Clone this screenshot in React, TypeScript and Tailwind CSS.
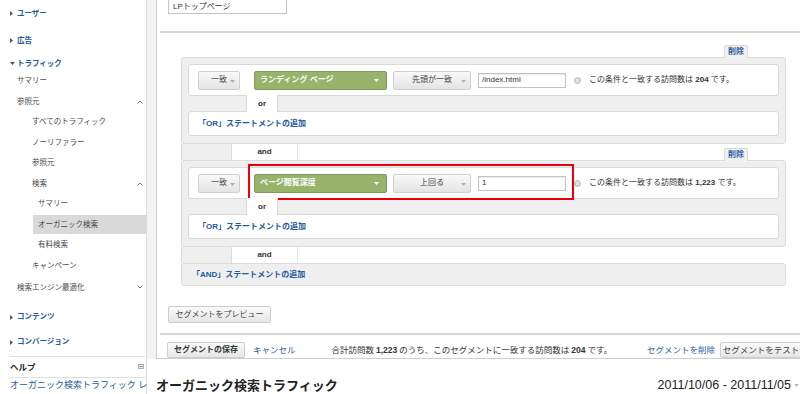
import React from "react";

const Caret = ({ color = "#9a9a9a" }: { color?: string }) => (
  <svg width="5" height="3" viewBox="0 0 5 3">
    <path d="M0 0h5L2.5 3z" fill={color} />
  </svg>
);

const TriRight = () => (
  <svg width="3" height="5" viewBox="0 0 3 5">
    <path d="M0 0l3 2.5L0 5z" fill="#555" />
  </svg>
);

const TriDown = () => (
  <svg width="5" height="3" viewBox="0 0 5 3">
    <path d="M0 0h5L2.5 3z" fill="#555" />
  </svg>
);

const Chev = ({ up = true }: { up?: boolean }) => (
  <svg width="6" height="4" viewBox="0 0 6 4">
    <path d={up ? "M0.5 3.5L3 1l2.5 2.5" : "M0.5 0.5L3 3l2.5-2.5"} stroke="#777" fill="none" strokeWidth="1" />
  </svg>
);

const ClearIcon = () => (
  <svg width="7" height="7" viewBox="0 0 7 7">
    <circle cx="3.5" cy="3.5" r="3.5" fill="#cacaca" />
    <path d="M2 2l3 3M5 2L2 5" stroke="#fff" strokeWidth="0.9" />
  </svg>
);

const Heading = ({ label, h, open = false }: { label: string; h: string; open?: boolean }) => (
  <div className={`${h} flex items-center pl-[10px]`}>
    <div className="w-[7px] flex items-center">{open ? <TriDown /> : <TriRight />}</div>
    <span className="text-[7.5px] font-bold text-[#245a9c]">{label}</span>
  </div>
);

const SubItem = ({ label, pl, chev }: { label: string; pl: string; chev?: "up" | "down" }) => (
  <div className={`h-[20.5px] flex items-center justify-between ${pl} pr-[3px] text-[7.5px] text-[#4a4a4a]`}>
    <span>{label}</span>
    {chev && <Chev up={chev === "up"} />}
  </div>
);

const GrayBtn = ({ children, w, bold = false }: { children: React.ReactNode; w: string; bold?: boolean }) => (
  <div
    className={`${w} h-[16px] shrink-0 flex items-center justify-center rounded-[2px] border border-[#cdcdcd] bg-gradient-to-b from-[#fafafa] to-[#e6e6e6] text-[8px] ${bold ? "font-bold text-[#333]" : "text-[#444]"}`}
  >
    {children}
  </div>
);

const SelectBtn = ({ label, w }: { label: string; w: string }) => (
  <div
    className={`${w} relative h-[19px] shrink-0 flex items-center justify-center rounded-[2px] border border-[#d0d0d0] bg-gradient-to-b from-[#f9f9f9] to-[#e4e4e4] text-[8px] text-[#444]`}
  >
    <span>{label}</span>
    <div className="absolute right-[4px] top-[8px]">
      <Caret color="#b0b0b0" />
    </div>
  </div>
);

const ConditionBlock = ({ field, op, value, count }: { field: string; op: string; value: string; count: string }) => (
  <div className="h-[87px] rounded-[3px] border border-[#dcdcdc] bg-[#efefef] px-[6px] pt-[6px] pb-[7px] flex flex-col">
    <div className="h-[32px] shrink-0 rounded-[3px] border border-[#d9d9d9] bg-white flex items-center pl-[9px]">
      <SelectBtn label="一致" w="w-[42px]" />
      <div className="ml-[14px] w-[133px] h-[19px] shrink-0 rounded-[2px] border border-[#7f9b58] bg-[#98b36c] flex items-center justify-between pl-[5px] pr-[7px]">
        <span className="text-[8px] font-bold text-white">{field}</span>
        <Caret color="#ffffff" />
      </div>
      <div className="ml-[6px]">
        <SelectBtn label={op} w="w-[78px]" />
      </div>
      <div className="ml-[7px] w-[88px] h-[15px] shrink-0 border border-[#c2c2c2] shadow-[inset_0_1px_1px_rgba(0,0,0,0.08)] bg-white flex items-center pl-[3px] text-[8px] text-[#333]">
        {value}
      </div>
      <div className="ml-[8px] flex items-center">
        <ClearIcon />
      </div>
      <div className="ml-[8px] text-[8px] text-[#333] whitespace-nowrap">
        この条件と一致する訪問数は <span className="font-bold">{count}</span> です。
      </div>
    </div>
    <div className="h-[15px] shrink-0 flex">
      <div className="relative z-10 ml-[58px] w-[32px] -my-[1px] h-[17px] bg-white border-x border-[#d9d9d9] flex items-center justify-center text-[8px] font-bold text-[#333]">
        or
      </div>
    </div>
    <div className="h-[25px] shrink-0 rounded-[3px] border border-[#d9d9d9] bg-white flex items-center pl-[9px] text-[8px] font-bold text-[#245a9c]">
      「OR」ステートメントの追加
    </div>
  </div>
);

const DeleteTab = () => (
  <div className="relative z-10 -mb-[1px] w-[24px] h-[13px] bg-[#f1f1f1] border border-b-0 border-[#d8d8d8] rounded-t-[2px] flex items-center justify-center text-[8px] font-bold text-[#2a5f9f]">
    削除
  </div>
);

const AndRow = ({ withDelete }: { withDelete?: boolean }) => (
  <div className="h-[16px] flex">
    <div className="w-[51px] bg-[#efefef] border-x border-[#dcdcdc]" />
    <div className="w-[65px] bg-white flex items-center justify-center text-[8px] font-bold text-[#333]">and</div>
    <div className="flex-1 border-l border-[#e2e2e2] flex items-end justify-end pr-[38px]">
      {withDelete && <DeleteTab />}
    </div>
  </div>
);

export default function App() {
  return (
    <div className="relative w-[800px] h-[394px] overflow-hidden bg-white flex font-['Liberation_Sans','Noto_Sans_CJK_JP',sans-serif] leading-none">
      {/* Sidebar */}
      <div className="w-[147px] shrink-0 h-[394px] border-r border-[#dadada] bg-white pt-[1px] flex flex-col">
        <Heading label="ユーザー" h="h-[26px]" />
        <Heading label="広告" h="h-[28px]" />
        <Heading label="トラフィック" h="h-[18px]" open />
        <div className="h-[18.75px] pb-[2px] flex items-center pl-[17px] text-[7.5px] text-[#4a4a4a]">サマリー</div>
        <SubItem label="参照元" pl="pl-[17px]" chev="up" />
        <SubItem label="すべてのトラフィック" pl="pl-[32px]" />
        <SubItem label="ノーリファラー" pl="pl-[32px]" />
        <SubItem label="参照元" pl="pl-[32px]" />
        <SubItem label="検索" pl="pl-[32px]" chev="up" />
        <SubItem label="サマリー" pl="pl-[38px]" />
        <div className="h-[20.5px] flex items-center">
          <div className="ml-[33px] flex-1 h-[19px] bg-[#d9d9d9] flex items-center pl-[5px] text-[7.5px] text-[#444]">
            オーガニック検索
          </div>
        </div>
        <SubItem label="有料検索" pl="pl-[38px]" />
        <SubItem label="キャンペーン" pl="pl-[32px]" />
        <div className="h-[23.5px] flex items-center justify-between pl-[17px] pr-[3px] text-[7.5px] text-[#4a4a4a]">
          <span>検索エンジン最適化</span>
          <Chev up={false} />
        </div>
        <Heading label="コンテンツ" h="h-[36px]" />
        <Heading label="コンバージョン" h="h-[14px]" />
        <div className="mt-[7px] ml-[10px] mr-[1px] border-t border-[#dedede]">
          <div className="h-[21px] flex items-center justify-between border-b border-[#dedede]">
            <span className="text-[8.5px] font-bold text-[#222]">ヘルプ</span>
            <svg width="6" height="5" viewBox="0 0 6 5" className="mr-[1px]">
              <rect x="0.5" y="0.5" width="5" height="4" fill="#eee" stroke="#999" strokeWidth="0.8" />
              <path d="M1.5 2.5h3" stroke="#777" strokeWidth="0.8" />
            </svg>
          </div>
          <div className="h-[16px] flex items-center whitespace-nowrap text-[9px] text-[#245a9c]">
            オーガニック検索トラフィック レ
          </div>
        </div>
      </div>

      {/* Right */}
      <div className="flex-1 flex flex-col min-w-0">
        <div className="h-[359px] flex shrink-0">
          <div className="w-[9px] bg-[#f3f3f3]" />
          <div className="flex-1 min-w-0 border-l border-b border-[#cfcfcf] bg-white flex flex-col overflow-hidden">
            <div className="h-[31px] shrink-0 pl-[11px]">
              <div className="-mt-[3px] w-[119px] h-[17px] border border-[#c4c4c4] bg-white flex items-center pl-[4px] pt-[2px] text-[8px] text-[#333]">
                LPトップページ
              </div>
            </div>
            <div className="ml-[3px] h-[2px] shrink-0 bg-[#d5d5d5]" />

            <div className="pl-[24px] pr-[14px] pt-[12px] flex flex-col">
              <div className="h-[12px] flex items-end justify-end pr-[38px]">
                <DeleteTab />
              </div>
              <ConditionBlock field="ランディング ページ" op="先頭が一致" value="/index.html" count="204" />
              <AndRow withDelete />
              <ConditionBlock field="ページ閲覧深度" op="上回る" value="1" count="1,223" />
              <AndRow />
              <div className="h-[23px] rounded-[3px] border border-[#dcdcdc] bg-[#efefef] flex items-center pl-[10px] text-[8px] font-bold text-[#245a9c]">
                「AND」ステートメントの追加
              </div>
            </div>

            <div className="mt-[20px] ml-[11px]">
              <div className="w-[103px] h-[17px] flex items-center justify-center rounded-[2px] border border-[#cdcdcd] bg-gradient-to-b from-[#fafafa] to-[#e6e6e6] text-[8px] text-[#444]">
                セグメントをプレビュー
              </div>
            </div>
            <div className="mt-[10px] ml-[3px] h-[2px] shrink-0 bg-[#d5d5d5]" />

            <div className="h-[23px] shrink-0 flex items-start pt-[7px] pl-[10px] whitespace-nowrap">
              <GrayBtn w="w-[78px]" bold>
                セグメントの保存
              </GrayBtn>
              <div className="ml-[8px] h-[16px] flex items-center text-[8.5px] text-[#2a5f9f]">キャンセル</div>
              <div className="ml-[36px] h-[16px] flex items-center text-[8.5px] text-[#333]">
                合計訪問数 <span className="font-bold mx-[2px]">1,223</span> のうち、このセグメントに一致する訪問数は{" "}
                <span className="font-bold mx-[2px]">204</span> です。
              </div>
              <div className="ml-auto h-[16px] flex items-center text-[8.5px] text-[#2a5f9f]">セグメントを削除</div>
              <div className="ml-[5px] -mr-[12px]">
                <GrayBtn w="w-[92px]">
                  <span className="pr-[10px] text-[8.5px]">セグメントをテスト</span>
                </GrayBtn>
              </div>
            </div>
          </div>
        </div>

        <div className="h-[35px] flex items-start pt-[19px] pl-[9px] pr-[1px] justify-between whitespace-nowrap">
          <span className="text-[13px] leading-[15px] font-bold text-[#222]">オーガニック検索トラフィック</span>
          <div className="flex items-center gap-[3px]">
            <span className="text-[12.5px] leading-[15px] text-[#222]">2011/10/06 - 2011/11/05</span>
            <Caret color="#bbb" />
          </div>
        </div>
      </div>

      {/* Red annotation */}
      <div className="absolute left-[248px] top-[164px] w-[326px] h-[36px] border-2 border-[#e8000b] pointer-events-none" />
    </div>
  );
}
